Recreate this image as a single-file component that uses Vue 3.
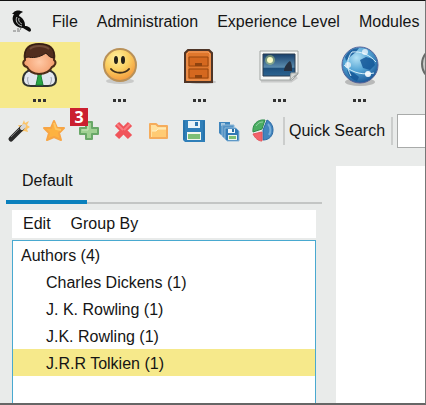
<template>
  <div class="app-window">
    <nav class="menu-bar" aria-label="Main menu">
      <svg class="logo" viewBox="0 0 22 24" aria-hidden="true">
        <path d="M1 4 L3 2 C5 0 9 0 12 2 C10 3 8 4 8 6 C12 8 14 11 14 16 C17 16 20 18 20 20 C20 22 18 22 17 21 L12 18 C7 18 3 15 2 11 C1 8 2 6 3 4 Z" fill="#0d0d0d" />
        <path d="M6 7 C4 10 6 15 11 16 M8 8 C7 11 9 13 11 14" fill="none" stroke="#c4c6c5" stroke-width="1" />
        <path d="M7 18 V20 M10 18 L9 20 M2 21 H5 M6 21 H9" stroke="#777" stroke-width="1" />
      </svg>
      <button v-for="item in menus" :key="item" type="button">{{ item }}</button>
    </nav>

    <div class="module-bar">
      <button
        v-for="mod in modules"
        :key="mod"
        type="button"
        class="module"
        :class="{ active: mod === activeModule }"
        :aria-label="mod"
      >
        <svg v-if="mod === 'authors'" viewBox="0 0 40 46">
          <defs>
            <radialGradient id="skin" cx="50%" cy="60%" r="60%">
              <stop offset="0" stop-color="#ffc9a6" />
              <stop offset="1" stop-color="#f0935f" />
            </radialGradient>
          </defs>
          <path d="M4 37 C4 30 8 28 13 26 H27 C33 28 37 30 37 37 C37 42 33 43 29 43 H12 C8 43 4 42 4 37 Z" fill="#e2e6ee" stroke="#2f3331" stroke-width="2" />
          <path d="M9 34 C8 37 9 39 10 42 M32 34 C33 37 32 39 31 42" fill="none" stroke="#a0a6b2" stroke-width="1" />
          <path d="M14 28 L20 35 L27 28 Z" fill="#fff" />
          <path d="M18 29 H23 L22 33 L24 42 H17 L19 33 Z" fill="#2aa544" stroke="#188034" />
          <path d="M6 17 C4 5 11 1 20 1 C30 1 37 5 35 17 C38 19 36 23 33 24 C31 28 27 31 20 31 C14 31 10 28 8 24 C4 23 3 19 6 17 Z" fill="url(#skin)" stroke="#4d2c18" stroke-width="2" />
          <path d="M6 15 C5 5 11 1 20 1 C30 1 36 5 35 15 C32 15 29 13 27 10 C20 15 13 15 9 14 C8 14 7 15 6 15 Z" fill="#512d1e" stroke="#2d1a12" />
          <path d="M11 6 C15 2 25 2 30 6" fill="none" stroke="#87604a" stroke-width="2" opacity=".6" />
        </svg>

        <svg v-else-if="mod === 'smiley'" viewBox="0 0 40 46">
          <defs>
            <radialGradient id="face" cx="40%" cy="28%" r="75%">
              <stop offset="0" stop-color="#fff0a0" />
              <stop offset=".5" stop-color="#fbd062" />
              <stop offset="1" stop-color="#f2953a" />
            </radialGradient>
          </defs>
          <ellipse cx="21" cy="38" rx="14" ry="3" fill="#999" opacity=".4" />
          <circle cx="21" cy="22" r="16" fill="url(#face)" stroke="#b99158" stroke-width="2" />
          <ellipse cx="17" cy="17" rx="2" ry="4" fill="#252018" />
          <ellipse cx="24" cy="17" rx="2" ry="4" fill="#252018" />
          <path d="M12 26 C16 31 26 31 30 26" fill="none" stroke="#42301c" stroke-width="2" stroke-linecap="round" />
        </svg>

        <svg v-else-if="mod === 'archive'" viewBox="0 0 40 46">
          <ellipse cx="23" cy="39" rx="14" ry="2" fill="#999" opacity=".5" />
          <path d="M6 39 V10 L9 7 H30 L33 10 V39 Z" fill="#e0772c" stroke="#4f3527" stroke-width="2" />
          <path d="M8 37 V11 L10 9 H29 L31 11 V37 Z" fill="none" stroke="#f5a364" />
          <path d="M10 14 H29 V23 H10 Z M10 26 H29 V35 H10 Z" fill="#d5681f" stroke="#96470f" />
          <path d="M16 20 H23 V23 H16 Z M16 32 H23 V35 H16 Z" fill="#8f430f" />
        </svg>

        <svg v-else-if="mod === 'pictures'" viewBox="0 0 40 46">
          <defs>
            <linearGradient id="sky" x1="0" y1="0" x2="0" y2="1">
              <stop offset="0" stop-color="#173f6b" />
              <stop offset=".6" stop-color="#5b8cae" />
              <stop offset=".65" stop-color="#1d4f7c" />
              <stop offset="1" stop-color="#2b6491" />
            </linearGradient>
          </defs>
          <path d="M2 38 H32 L38 34" fill="none" stroke="#aaa" stroke-width="3" opacity=".5" />
          <path d="M1 8 H39 V31 L33 37 H1 Z" fill="#f6f7f5" stroke="#a0a4a2" />
          <path d="M4 11 H36 V33 H4 Z" fill="url(#sky)" stroke="#2b3d50" />
          <path d="M25 28 C25 24 28 20 31 18 C33 20 33 24 33 28 Z" fill="#26303f" />
          <circle cx="11" cy="17" r="5" fill="#d9e878" opacity=".4" />
          <circle cx="11" cy="17" r="3" fill="#fbfcc5" />
          <path d="M31 37 L32 30 H39 Z" fill="#d5d8d6" stroke="#a0a4a2" />
        </svg>

        <svg v-else-if="mod === 'web'" viewBox="0 0 40 46">
          <defs>
            <radialGradient id="globe" cx="40%" cy="30%" r="70%">
              <stop offset="0" stop-color="#b4e2f5" />
              <stop offset=".5" stop-color="#56a6d6" />
              <stop offset="1" stop-color="#1d5c9b" />
            </radialGradient>
          </defs>
          <ellipse cx="21" cy="39" rx="15" ry="4" fill="#888" opacity=".5" />
          <circle cx="21" cy="22" r="18" fill="url(#globe)" stroke="#56639a" />
          <path d="M6 14 C9 8 14 5 20 5 L17 9 L12 13 L7 18 Z M21 17 L27 14 L34 16 L36 22 L31 27 L24 25 Z M8 27 L15 30 L20 34 L18 38 C12 36 9 32 8 27 Z" fill="#145798" opacity=".85" />
          <path d="M5 22 C14 31 26 32 35 30 M13 9 C22 8 31 12 37 19 M13 9 C8 15 7 24 12 33" fill="none" stroke="#d6effa" stroke-width="1" />
          <circle cx="9" cy="22" r="3" fill="#fff" opacity=".7" />
          <circle cx="29" cy="31" r="3" fill="#fff" opacity=".9" />
          <circle cx="26" cy="9" r="3" fill="#fff" opacity=".7" />
        </svg>

        <svg v-else viewBox="0 0 40 46">
          <circle cx="20" cy="21" r="17" fill="#c9cbc9" stroke="#686b69" stroke-width="2" />
          <circle cx="20" cy="21" r="13" fill="#8d918f" stroke="#555" />
        </svg>
        <span class="dots" aria-hidden="true"><i></i><i></i><i></i></span>
      </button>
    </div>

    <div class="tool-bar">
      <button type="button" class="tool" aria-label="Wizard">
        <svg viewBox="0 0 24 24">
          <path d="M17 1 L18 4 L22 2 L20 6 L23 8 L20 10 L21 13 L17 12 L14 13 L13 9 L11 6 L15 6 Z" fill="#fbc469" />
          <path d="M4 20 L15 9" stroke="#292929" stroke-width="5" stroke-linecap="round" />
          <path d="M15 9 L17 7" stroke="#d8d8d8" stroke-width="4" stroke-linecap="round" />
          <path d="M4 18 L12 10" stroke="#777" stroke-width="1" />
        </svg>
      </button>
      <button type="button" class="tool" aria-label="Favourite">
        <svg viewBox="0 0 24 24">
          <path d="M12 2 L15 9 L22 9 L17 14 L19 21 L12 18 L5 21 L7 14 L2 9 L9 9 Z" fill="#fdb240" stroke="#f7a545" stroke-width="2" stroke-linejoin="round" />
          <path d="M12 4 L14 10 L19 11" fill="none" stroke="#ffc763" stroke-width="2" />
        </svg>
      </button>
      <button type="button" class="tool" aria-label="Add">
        <svg viewBox="0 0 24 24">
          <path d="M9 3 H15 V9 H21 V15 H15 V20 H9 V15 H3 V9 H9 Z" fill="#9fd092" stroke="#69a868" stroke-width="2" stroke-linejoin="round" />
          <path d="M11 5 V11 H5" fill="none" stroke="#c5e7b9" />
        </svg>
        <span class="badge">3</span>
      </button>
      <button type="button" class="tool" aria-label="Delete">
        <svg viewBox="0 0 24 24">
          <path d="M5 5 L18 18 M18 5 L5 18" stroke="#f0545a" stroke-width="6" />
          <path d="M5 5 L11 11 M18 5 L12 11" stroke="#f97b7f" stroke-width="2" />
        </svg>
      </button>
      <button type="button" class="tool" aria-label="Open">
        <svg viewBox="0 0 24 24">
          <path d="M3 19 V5 H9 L11 7 H20 V19 Z" fill="#ffe1a0" stroke="#f5ac5c" stroke-width="2" stroke-linejoin="round" />
          <path d="M5 12 H9 L11 10 H19 V18 H5 Z" fill="#ffcb74" />
          <path d="M5 12 H9 L11 10 H19" fill="none" stroke="#fff0c6" />
        </svg>
      </button>
      <button type="button" class="tool" aria-label="Save">
        <svg viewBox="0 0 24 24">
          <path d="M1 1 H23 V23 H3 L1 21 Z" fill="#2f7fb9" />
          <path d="M2 2 V20 M22 2 V21" stroke="#216ba1" />
          <path d="M6 2 H18 V9 H6 Z" fill="#e7f3f8" />
          <path d="M13 3 H16 V7 H13 Z" fill="#2c77af" />
          <path d="M5 13 H19 V21 H5 Z" fill="#f3f7ed" />
          <path d="M6 15 H18 V20 H6 Z" fill="#7dbf76" />
        </svg>
      </button>
      <button type="button" class="tool" aria-label="Save all">
        <svg viewBox="0 0 24 24">
          <path d="M2 3 H13 V16 H4 L2 14 Z" fill="#3f85bd" />
          <path d="M4 4 H8 V7 H4 Z" fill="#a9cae2" />
          <path d="M5 6 H17 V19 H7 L5 17 Z" fill="#5593c5" stroke="#8db8d8" />
          <path d="M8 9 H19 L22 12 V22 H10 L8 20 Z" fill="#3179b5" stroke="#8db8d8" />
          <path d="M11 10 H18 V14 H11 Z" fill="#f0f7fa" />
          <path d="M15 10 H17 V13 H15 Z" fill="#296da3" />
          <path d="M11 16 H20 V21 H11 Z" fill="#eef5ec" />
          <path d="M12 17 H19 V20 H12 Z" fill="#7dbf76" />
        </svg>
      </button>
      <button type="button" class="tool" aria-label="Statistics">
        <svg viewBox="0 0 24 24">
          <path d="M11 11 L15 1 C19 3 21 7 21 11 C21 17 17 21 11 21 Z" fill="#4285be" stroke="#2b6aa5" />
          <path d="M10 10 L1 13 C0 6 5 0 13 1 Z" fill="#4bad62" stroke="#2e8c4a" />
          <path d="M10 13 V22 C6 22 3 19 1 15 Z" fill="#f2636a" stroke="#e3555d" />
          <path d="M4 7 C6 4 8 3 11 3" fill="none" stroke="#8fd0a0" stroke-width="1" />
          <path d="M16 5 C19 8 19 13 17 16" fill="none" stroke="#78aed8" stroke-width="2" />
        </svg>
      </button>
      <span class="separator"></span>
      <label for="quick-search">Quick Search</label>
      <span class="separator"></span>
      <input id="quick-search" v-model="search" type="text" />
    </div>

    <main class="workspace">
      <section class="side-panel">
        <div class="tabs" role="tablist">
          <button type="button" role="tab" aria-selected="true">Default</button>
        </div>
        <div class="tree-menu">
          <button type="button">Edit</button>
          <button type="button">Group By</button>
        </div>
        <ul class="tree">
          <li>
            <span class="row">Authors ({{ authors.length }})</span>
            <ul>
              <li
                v-for="author in authors"
                :key="author.name"
                class="row author"
                :class="{ selected: author.name === selected }"
                @click="selected = author.name"
              >
                {{ author.name }} ({{ author.count }})
              </li>
            </ul>
          </li>
        </ul>
      </section>
      <section class="content"></section>
    </main>
  </div>
</template>

<script setup>
import { ref } from 'vue';

const menus = ['File', 'Administration', 'Experience Level', 'Modules'];
const modules = ['authors', 'smiley', 'archive', 'pictures', 'web', 'settings'];
const activeModule = ref('authors');

const authors = [
  { name: 'Charles Dickens', count: 1 },
  { name: 'J. K. Rowling', count: 1 },
  { name: 'J.K. Rowling', count: 1 },
  { name: 'J.R.R Tolkien', count: 1 }
];
const selected = ref('J.R.R Tolkien');
const search = ref('');
</script>

<style>
body {
  margin: 0;
}
</style>

<style scoped>
.app-window {
  display: flex;
  flex-direction: column;
  box-sizing: border-box;
  min-height: 100vh;
  overflow: hidden;
  border-top: 1px solid #111;
  border-right: 1px solid #777;
  border-bottom: 2px solid #666;
  background: #e9ebea;
  color: #151515;
  font-family: "Liberation Sans", Arial, sans-serif;
  font-size: 16px;
  line-height: 20px;
}

button {
  padding: 0;
  border: 0;
  background: none;
  color: inherit;
  font: inherit;
  white-space: nowrap;
}

.menu-bar {
  display: flex;
  align-items: center;
  gap: 19px;
  height: 41px;
  padding-left: 11px;
}

.logo {
  width: 22px;
  height: 24px;
}

.module-bar {
  display: flex;
  height: 66px;
}

.module {
  display: flex;
  flex: none;
  flex-direction: column;
  align-items: center;
  box-sizing: border-box;
  width: 80px;
  padding: 1px 2px 0 0;
}

.module.active {
  background: #f6e98b;
}

.module svg {
  width: 40px;
  height: 46px;
}

.dots {
  display: flex;
  gap: 2px;
  padding-top: 10px;
}

.dots i {
  width: 3px;
  height: 3px;
  background: #333;
}

.tool-bar {
  display: flex;
  align-items: center;
  height: 46px;
  padding-left: 1px;
}

.tool {
  position: relative;
  display: flex;
  flex: none;
  justify-content: center;
  width: 35px;
}

.tool svg {
  width: 24px;
  height: 24px;
}

/* step marker over the Add button */
.badge {
  position: absolute;
  top: -11px;
  left: -1px;
  width: 18px;
  height: 18px;
  background: #cb1f30;
  color: #fff;
  font-family: "Open Sans", sans-serif;
  font-size: 16px;
  font-weight: 700;
  line-height: 18px;
  text-align: center;
}

.separator {
  flex: none;
  width: 2px;
  height: 28px;
  margin-left: 2px;
  background: #cbcdcc;
}

.tool-bar label {
  flex: none;
  padding: 0 4px;
}

.tool-bar input {
  flex: 1;
  box-sizing: border-box;
  min-width: 60px;
  height: 34px;
  margin-left: 4px;
  border: 1px solid #a9abaa;
  background: #fff;
  font: inherit;
}

.workspace {
  display: flex;
  flex: 1;
  padding-top: 12px;
}

.side-panel {
  display: flex;
  flex: 0 0 79%;
  flex-direction: column;
}

.tabs {
  display: flex;
  height: 36px;
  margin: 0 14px 0 6px;
  border-bottom: 2px solid #c3c5c4;
}

.tabs button {
  box-sizing: border-box;
  height: 38px;
  padding: 0 14px 4px 16px;
  border-bottom: 4px solid #0a80bd;
}

.tree-menu {
  display: flex;
  gap: 20px;
  height: 28px;
  margin: 6px 20px 2px 12px;
  padding-left: 11px;
  background: #fff;
}

.tree {
  flex: 1;
  margin: 0 20px 0 12px;
  border: 1px solid #49a9d0;
  border-bottom: 0;
  background: #fff;
}

ul {
  margin: 0;
  padding: 0;
  list-style: none;
}

.row {
  display: block;
  height: 27px;
  padding-left: 8px;
  line-height: 30px;
}

.author {
  padding-left: 33px;
  cursor: default;
}

.selected {
  background: #f6e98b;
}

.content {
  flex: 1;
  background: #fff;
}
</style>
